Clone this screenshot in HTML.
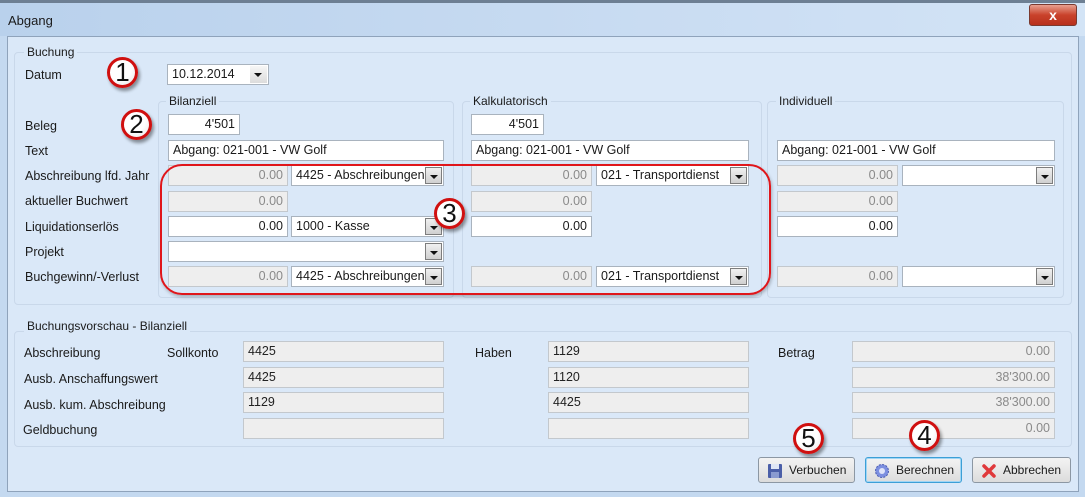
<!DOCTYPE html>
<html><head><meta charset="utf-8"><style>
*{box-sizing:border-box;margin:0;padding:0}
body{width:1085px;height:497px;overflow:hidden;background:#c4d9f0;font-family:"Liberation Sans",sans-serif;font-size:12px;color:#1a1a1a;position:relative}
.a{position:absolute}
.title{left:0;top:0;width:1085px;height:36px;background:linear-gradient(90deg,#b9d1ec 0%,#c9dcf2 60%,#d3e4f6 100%);border-top:3px solid #6d7f93}
.content{left:7px;top:36px;width:1072px;height:456px;background:#dae8f8;border:1px solid #8fa3bb}
.grp{border:1px solid #c9d8ea;border-radius:4px}
.gl{background:#dae8f8;padding:0 3px;white-space:nowrap}
.lbl{white-space:nowrap;line-height:14px;font-size:12.5px}
.in{height:21px;border:1px solid #a9b3be;background:#fff;line-height:19px;padding:0 4px;white-space:nowrap;overflow:hidden;font-size:12.5px}
.g{background:#eeeeee;color:#8a8a8a;border-color:#c3c8cd}
.gd{background:#eeeeee;color:#222;border-color:#c3c8cd}
.r{text-align:right}
.dd{position:absolute;right:1px;top:1px;width:17px;height:17px;background:linear-gradient(#f0f0f0,#d0d0d0);border:1px solid #7d7d7d}
.dd:after{content:"";position:absolute;left:4px;top:7px;border-left:4px solid transparent;border-right:4px solid transparent;border-top:4px solid #111}
.num{width:31px;height:31px;border-radius:50%;border:3px solid #d01010;background:radial-gradient(circle at 40% 35%,#fff 50%,#e4e4e4);font-size:26px;line-height:25px;text-align:center;color:#111;box-shadow:2px 3px 3px rgba(0,0,0,.4)}
.btn{height:26px;border:1px solid #8c97a3;border-radius:3px;background:linear-gradient(#f3f3f3,#dcdcdc);line-height:24px;white-space:nowrap}
</style></head><body>
<div class="a title"></div>
<div class="a lbl" style="left:8px;top:14px;font-size:13px">Abgang</div>
<div class="a" style="left:1029px;top:4px;width:48px;height:22px;border-radius:3px;background:linear-gradient(#e8a090,#c9422b 50%,#b8301c);border:1px solid #7a3a30;color:#fff;text-align:center;font-weight:bold;font-size:14px;line-height:20px">x</div>
<div class="a content"></div>

<div class="a grp" style="left:14px;top:52px;width:1058px;height:253px"></div>
<div class="a gl" style="left:24px;top:45px">Buchung</div>
<div class="a lbl" style="left:25px;top:68px">Datum</div>
<div class="a in" style="left:167px;top:64px;width:102px">10.12.2014<div class="dd" style="border:none;background:linear-gradient(#f6f6f6,#dcdcdc)"></div></div>

<div class="a grp" style="left:158px;top:101px;width:296px;height:197px"></div>
<div class="a gl" style="left:166px;top:94px">Bilanziell</div>
<div class="a grp" style="left:462px;top:101px;width:300px;height:197px"></div>
<div class="a gl" style="left:470px;top:94px">Kalkulatorisch</div>
<div class="a grp" style="left:767px;top:101px;width:297px;height:197px"></div>
<div class="a gl" style="left:776px;top:94px">Individuell</div>

<div class="a lbl" style="left:25px;top:119px">Beleg</div>
<div class="a lbl" style="left:25px;top:144px">Text</div>
<div class="a lbl" style="left:25px;top:169px">Abschreibung lfd. Jahr</div>
<div class="a lbl" style="left:25px;top:194px">aktueller Buchwert</div>
<div class="a lbl" style="left:25px;top:220px">Liquidationserlös</div>
<div class="a lbl" style="left:25px;top:245px">Projekt</div>
<div class="a lbl" style="left:25px;top:270px">Buchgewinn/-Verlust</div>

<div class="a in r" style="left:168px;top:114px;width:72px">4'501</div>
<div class="a in r" style="left:471px;top:114px;width:73px">4'501</div>
<div class="a in" style="left:168px;top:140px;width:276px">Abgang: 021-001 - VW Golf</div>
<div class="a in" style="left:471px;top:140px;width:278px">Abgang: 021-001 - VW Golf</div>
<div class="a in" style="left:777px;top:140px;width:278px">Abgang: 021-001 - VW Golf</div>

<div class="a in g r" style="left:168px;top:165px;width:120px">0.00</div>
<div class="a in" style="left:291px;top:165px;width:153px">4425 - Abschreibungen F<div class="dd"></div></div>
<div class="a in g r" style="left:471px;top:165px;width:121px">0.00</div>
<div class="a in" style="left:596px;top:165px;width:153px">021 - Transportdienst<div class="dd"></div></div>
<div class="a in g r" style="left:777px;top:165px;width:121px">0.00</div>
<div class="a in" style="left:902px;top:165px;width:153px"><div class="dd"></div></div>

<div class="a in g r" style="left:168px;top:191px;width:120px">0.00</div>
<div class="a in g r" style="left:471px;top:191px;width:121px">0.00</div>
<div class="a in g r" style="left:777px;top:191px;width:121px">0.00</div>

<div class="a in r" style="left:168px;top:216px;width:120px">0.00</div>
<div class="a in" style="left:291px;top:216px;width:153px">1000 - Kasse<div class="dd"></div></div>
<div class="a in r" style="left:471px;top:216px;width:121px">0.00</div>
<div class="a in r" style="left:777px;top:216px;width:121px">0.00</div>

<div class="a in" style="left:168px;top:241px;width:276px"><div class="dd"></div></div>

<div class="a in g r" style="left:168px;top:266px;width:120px">0.00</div>
<div class="a in" style="left:291px;top:266px;width:153px">4425 - Abschreibungen F<div class="dd"></div></div>
<div class="a in g r" style="left:471px;top:266px;width:121px">0.00</div>
<div class="a in" style="left:596px;top:266px;width:153px">021 - Transportdienst<div class="dd"></div></div>
<div class="a in g r" style="left:777px;top:266px;width:121px">0.00</div>
<div class="a in" style="left:902px;top:266px;width:153px"><div class="dd"></div></div>

<div class="a" style="left:160px;top:164px;width:611px;height:131px;border:2px solid #e0161b;border-radius:22px;box-shadow:1px 2px 3px rgba(0,0,0,.25)"></div>

<div class="a grp" style="left:14px;top:331px;width:1058px;height:116px"></div>
<div class="a gl" style="left:24px;top:319px">Buchungsvorschau - Bilanziell</div>
<div class="a lbl" style="left:24px;top:346px">Abschreibung</div>
<div class="a lbl" style="left:167px;top:346px">Sollkonto</div>
<div class="a lbl" style="left:24px;top:372px">Ausb. Anschaffungswert</div>
<div class="a lbl" style="left:24px;top:398px">Ausb. kum. Abschreibung</div>
<div class="a lbl" style="left:23px;top:423px">Geldbuchung</div>
<div class="a lbl" style="left:475px;top:346px">Haben</div>
<div class="a lbl" style="left:778px;top:346px">Betrag</div>

<div class="a in gd" style="left:243px;top:341px;width:201px">4425</div>
<div class="a in gd" style="left:243px;top:367px;width:201px">4425</div>
<div class="a in gd" style="left:243px;top:392px;width:201px">1129</div>
<div class="a in gd" style="left:243px;top:418px;width:201px"></div>
<div class="a in gd" style="left:548px;top:341px;width:201px">1129</div>
<div class="a in gd" style="left:548px;top:367px;width:201px">1120</div>
<div class="a in gd" style="left:548px;top:392px;width:201px">4425</div>
<div class="a in gd" style="left:548px;top:418px;width:201px"></div>
<div class="a in g r" style="left:852px;top:341px;width:203px">0.00</div>
<div class="a in g r" style="left:852px;top:367px;width:203px">38'300.00</div>
<div class="a in g r" style="left:852px;top:392px;width:203px">38'300.00</div>
<div class="a in g r" style="left:852px;top:418px;width:203px">0.00</div>

<div class="a btn" style="left:758px;top:457px;width:97px"><svg class="a" style="left:8px;top:5px" width="16" height="16" viewBox="0 0 16 16"><rect x="1" y="1" width="14" height="14" rx="1" fill="#4b5fa8"/><rect x="4" y="1" width="8" height="5" fill="#dfe6f5"/><rect x="4" y="9" width="8" height="6" fill="#8a9bd0"/></svg><span class="a" style="left:30px">Verbuchen</span></div>
<div class="a btn" style="left:865px;top:457px;width:97px;border-color:#3c9fd6;box-shadow:inset 0 0 0 1px #9fd5f5"><svg class="a" style="left:8px;top:5px" width="16" height="16" viewBox="0 0 16 16"><circle cx="8" cy="8" r="6.5" fill="#7c8fe0" stroke="#4b5cb0" stroke-dasharray="2 1.4"/><circle cx="8" cy="8" r="3" fill="#dfe4fa"/></svg><span class="a" style="left:30px">Berechnen</span></div>
<div class="a btn" style="left:972px;top:457px;width:99px"><svg class="a" style="left:8px;top:5px" width="16" height="16" viewBox="0 0 16 16"><path d="M3 3L13 13M13 3L3 13" stroke="#e0393b" stroke-width="3.5" stroke-linecap="round"/></svg><span class="a" style="left:30px">Abbrechen</span></div>

<div class="a num" style="left:107px;top:57px">1</div>
<div class="a num" style="left:121px;top:109px">2</div>
<div class="a num" style="left:434px;top:198px">3</div>
<div class="a num" style="left:909px;top:420px">4</div>
<div class="a num" style="left:793px;top:423px">5</div>
</body></html>
